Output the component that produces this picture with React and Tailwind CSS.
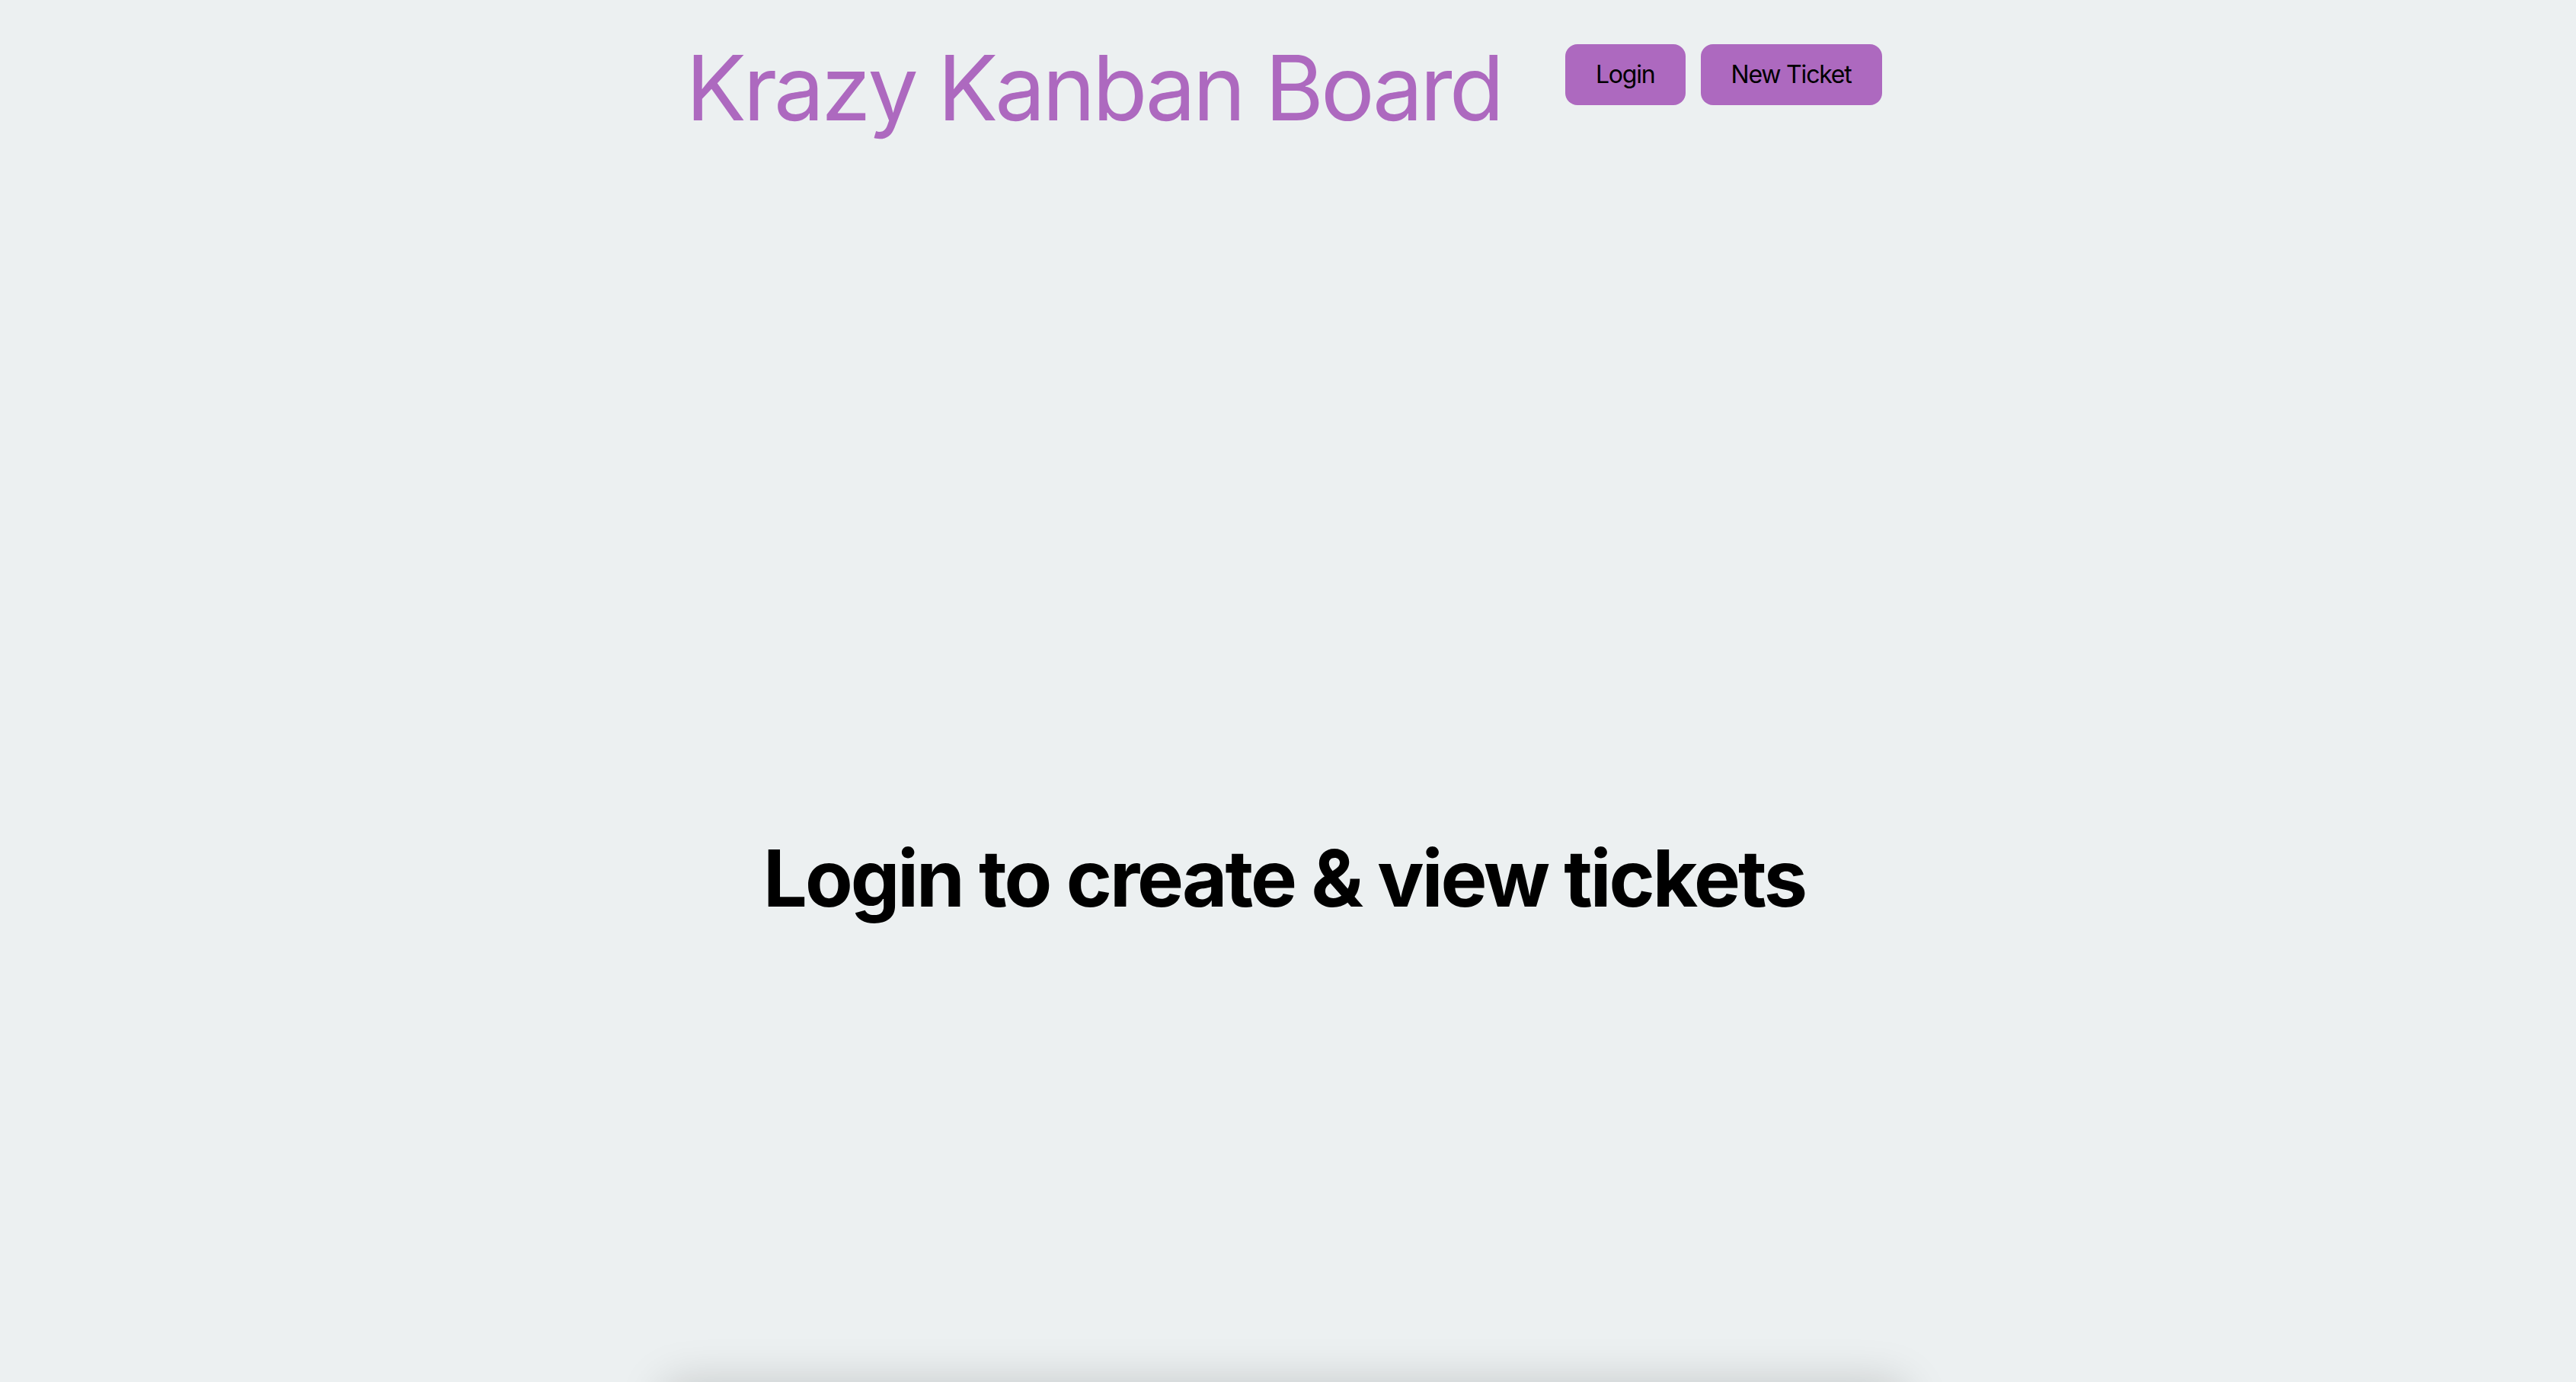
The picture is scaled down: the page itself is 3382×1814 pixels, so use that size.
export default function App() {
  return (
    <div className="min-h-screen bg-[#ecf0f1] font-['Inter',sans-serif] overflow-hidden">
      <header className="flex justify-center items-start pt-[44px] gap-[84px] pr-[11px]">
        <h1 className="text-[118px] leading-[1.21] font-normal text-[#ad69bf] tracking-[-4px]">
          Krazy Kanban Board
        </h1>
        <div className="flex gap-[20px] mt-[14px]">
          <button className="h-[80px] px-[38px] rounded-[16px] border-2 border-transparent bg-[#ad69bf] text-black text-[32px] leading-none tracking-[-1.2px]">
            Login
          </button>
          <button className="h-[80px] px-[38px] rounded-[16px] border-2 border-transparent bg-[#ad69bf] text-black text-[32px] leading-none tracking-[-1.2px]">
            New Ticket
          </button>
        </div>
      </header>
      <main className="flex flex-col items-center pr-[10px]">
        <h2 className="mt-[905px] text-[102.4px] leading-[1.21] font-bold text-black tracking-[-3px]">
          Login to create &amp; view tickets
        </h2>
        <div className="mt-[600px] w-[1630px] h-[300px] rounded-[20px] shadow-[0_0_60px_rgba(0,0,0,0.18)]"></div>
      </main>
    </div>
  );
}
